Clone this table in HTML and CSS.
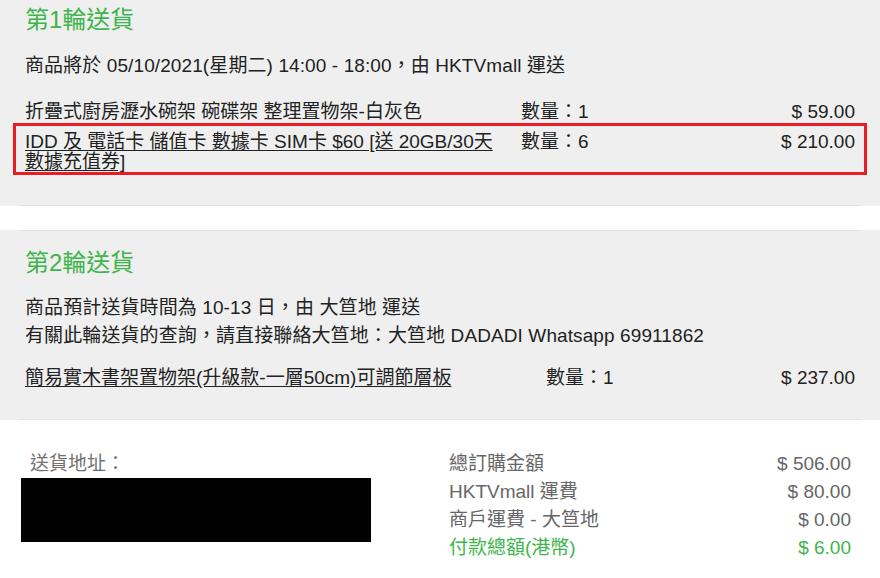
FILE: index.html
```html
<!DOCTYPE html>
<html lang="zh-Hant">
<head>
<meta charset="utf-8">
<title>訂單</title>
<link rel="stylesheet" href="styles.css">
</head>
<body>
<section class="panel panel-first">
  <div class="panel-inner">
    <h2 class="round-title">第1輪送貨</h2>
    <p class="note note-first">商品將於 05/10/2021(星期二) 14:00 - 18:00，由 HKTVmall 運送</p>
    <div class="items items-first">
      <div class="item-row">
        <span class="item-name">折疊式廚房瀝水碗架 碗碟架 整理置物架-白灰色</span>
        <span class="item-qty">數量：1</span>
        <span class="item-price">$ 59.00</span>
      </div>
      <div class="item-row">
        <a class="item-name link" href="#">IDD 及 電話卡 儲值卡 數據卡 SIM卡 $60 [送 20GB/30天數據充值券]</a>
        <span class="item-qty">數量：6</span>
        <span class="item-price">$ 210.00</span>
      </div>
    </div>
  </div>
  <div class="highlight"></div>
</section>

<section class="panel panel-second">
  <div class="panel-inner">
    <h2 class="round-title">第2輪送貨</h2>
    <p class="note note-first">商品預計送貨時間為 10-13 日，由 大笪地 運送</p>
    <p class="note">有關此輪送貨的查詢，請直接聯絡大笪地：大笪地 DADADI Whatsapp 69911862</p>
    <div class="items items-second">
      <div class="item-row item-row-wide">
        <a class="item-name link" href="#">簡易實木書架置物架(升級款-一層50cm)可調節層板</a>
        <span class="item-qty">數量：1</span>
        <span class="item-price">$ 237.00</span>
      </div>
    </div>
  </div>
</section>

<section class="summary">
  <div class="address">
    <div class="address-label">送貨地址：</div>
    <div class="address-redacted"></div>
  </div>
  <dl class="totals">
    <dt>總訂購金額</dt><dd>$ 506.00</dd>
    <dt>HKTVmall 運費</dt><dd>$ 80.00</dd>
    <dt>商戶運費 - 大笪地</dt><dd>$ 0.00</dd>
    <dt class="grand">付款總額(港幣)</dt><dd class="grand">$ 6.00</dd>
  </dl>
</section>
</body>
</html>
```

FILE: styles.css
```css
* { box-sizing: border-box; }

body {
  margin: 0;
  background: #ffffff;
  color: #222222;
  font-family: "Liberation Sans", "Noto Sans CJK TC", sans-serif;
  font-size: 19px;
}

.panel {
  position: relative;
  background: #efefef;
}

.panel-inner {
  margin: 0 20px;
  padding: 0 5px;
  border-bottom: 1px solid #e2e2e2;
}

.panel-first .panel-inner {
  padding-top: 6px;
  padding-bottom: 33px;
}

.panel-second {
  margin-top: 24px;
}

.panel-second .panel-inner {
  border-top: 1px solid #e2e2e2;
  padding-top: 18px;
  padding-bottom: 31px;
}

.round-title {
  margin: 0;
  font-size: 24px;
  font-weight: normal;
  line-height: 28px;
  color: #3db54b;
}

.note {
  margin: 0;
  line-height: 28px;
  letter-spacing: 0.1px;
}

.note-first {
  margin-top: 18px;
}

.panel-second .note-first {
  margin-top: 17px;
}

.items-first { margin-top: 22px; }
.items-second { margin-top: 18px; }

.item-row {
  display: grid;
  grid-template-columns: 482px 1fr auto;
  column-gap: 14px;
  line-height: 20px;
}

.item-row + .item-row {
  margin-top: 10px;
}

.item-row-wide {
  grid-template-columns: 507px 1fr auto;
}

.link {
  color: #222222;
  text-decoration: underline;
  text-underline-offset: 2px;
}

.item-price {
  text-align: right;
}

.highlight {
  position: absolute;
  left: 13px;
  top: 123px;
  width: 854px;
  height: 52px;
  border: 3px solid #ed1c24;
}

.summary {
  display: flex;
  justify-content: space-between;
  padding: 30px 29px 0 21px;
}

.address {
  width: 350px;
}

.address-label {
  padding-left: 9px;
  line-height: 28px;
  color: #707070;
}

.address-redacted {
  margin-top: 0;
  height: 64px;
  background: #000000;
}

.totals {
  width: 402px;
  margin: 0;
  display: grid;
  grid-template-columns: auto 1fr;
  line-height: 28px;
  color: #666666;
}

.totals dt,
.totals dd {
  margin: 0;
}

.totals dd {
  text-align: right;
}

.totals .grand {
  color: #3db54b;
}
```
